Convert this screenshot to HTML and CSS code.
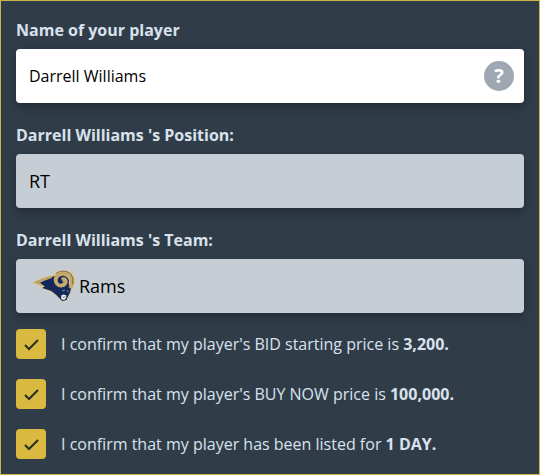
FILE: index.html
```html
<!DOCTYPE html>
<html lang="en">
<head>
    <meta charset="UTF-8">
    <meta name="viewport" content="width=device-width, initial-scale=1.0">
    <title>Confirm your player</title>
    <link rel="stylesheet" href="styles.css">
</head>
<body>
    <form class="player-form">
        <div class="field">
            <label class="title" for="player-name">Name of your player</label>
            <div class="box">
                <input type="text" id="player-name" value="Darrell Williams">
                <button type="button" class="help" aria-label="Help">?</button>
            </div>
        </div>
        <div class="field">
            <label class="title" for="position">Darrell Williams 's Position:</label>
            <div class="box locked">
                <input type="text" id="position" value="RT" readonly>
            </div>
        </div>
        <div class="field">
            <label class="title" for="team">Darrell Williams 's Team:</label>
            <div class="box locked">
                <svg class="team-logo" viewBox="36 27 128 93" aria-hidden="true">
                    <path d="M36 65 Q62 48 98 40 Q110 27 128 27 Q150 27 160 43 Q167 62 155 80 L151 86 Q151 96 145 102 L137 118 L125 119 L115 112 L112 105 L104 102 Q98 94 90 90 L65 82 L53 70 Z" fill="#dcc795"/>
                    <path d="M58 64 L98 46 L112 40 L150 76 Q148 94 142 101 L136 114 L124 117 L116 109 L106 99 L92 88 L66 79 L73 74 Z" fill="#14285b"/>
                    <path d="M39 65 Q63 49 98 43 L92 51 L59 62 L68 76 L54 68 Z" fill="#bfa266"/>
                    <path d="M147 80 Q157 65 151 51 Q144 37 127 38 Q107 40 105 56 Q107 71 121 72 Q135 70 134 59 Q130 52 123 56" fill="none" stroke="#c6a86b" stroke-width="12"/>
                    <path d="M121 66 Q112 64 113 55 Q117 45 129 46 Q141 49 142 60 Q142 70 135 77" fill="none" stroke="#14285b" stroke-width="4"/>
                    <path d="M105 37 Q130 23 149 38 Q159 51 154 68" fill="none" stroke="#5b4d39" stroke-width="2"/>
                    <path d="M123 88 L132 85 M137 88 L143 89" fill="none" stroke="#9aa5c2" stroke-width="2"/>
                    <path d="M121 101 L128 98 L136 101 L135 109 L129 114 L121 111 Z" fill="#f4f5f8"/>
                    <path d="M125 105 L129 107 L133 104" fill="none" stroke="#14285b" stroke-width="2"/>
                </svg>
                <input type="text" id="team" value="Rams" readonly>
            </div>
        </div>
        <div class="confirms">
            <label class="confirm">
                <input type="checkbox" checked>
                <svg class="tick" viewBox="0 0 30 30" aria-hidden="true"><path d="M9 16 L13 20 L22 11"/></svg>
                <span>I confirm that my player's BID starting price is <b>3,200.</b></span>
            </label>
            <label class="confirm">
                <input type="checkbox" checked>
                <svg class="tick" viewBox="0 0 30 30" aria-hidden="true"><path d="M9 16 L13 20 L22 11"/></svg>
                <span>I confirm that my player's BUY NOW price is <b>100,000.</b></span>
            </label>
            <label class="confirm">
                <input type="checkbox" checked>
                <svg class="tick" viewBox="0 0 30 30" aria-hidden="true"><path d="M9 16 L13 20 L22 11"/></svg>
                <span>I confirm that my player has been listed for <b>1 DAY.</b></span>
            </label>
        </div>
    </form>
</body>
</html>
```

FILE: styles.css
```css
* {
    box-sizing: border-box;
}
body {
    margin: 0;
    background: #303d49;
    color: #d9e2ec;
    font-family: 'Open Sans', sans-serif;
    font-size: 16px;
}
.player-form {
    min-height: 100vh;
    padding: 17px 15px 15px;
    border: 1px solid #cdb34c;
}
.field + .field {
    margin-top: 20px;
}
.title {
    display: block;
    margin-bottom: 7px;
    font-weight: 700;
    line-height: 24px;
}
.box {
    display: flex;
    align-items: center;
    height: 54px;
    padding: 0 10px 0 13px;
    border-radius: 4px;
    background: #fff;
    box-shadow: 0 4px 10px rgba(0, 0, 0, 0.3);
}
.box input {
    flex: 1;
    min-width: 0;
    padding: 0;
    border: none;
    outline: none;
    background: transparent;
    color: #000;
    font-family: inherit;
    font-size: 16px;
}
.locked {
    background: #c6cdd4;
}
.locked input {
    font-size: 18px;
}
.help {
    width: 30px;
    height: 30px;
    padding: 0;
    border: none;
    border-radius: 50%;
    background: #9fa8b2;
    color: #fff;
    font-family: inherit;
    font-size: 20px;
    font-weight: 700;
    line-height: 30px;
    cursor: pointer;
}
.team-logo {
    width: 44px;
    height: 32px;
    margin: 0 3px;
}
.confirms {
    display: flex;
    flex-direction: column;
    gap: 20px;
    margin-top: 16px;
}
.confirm {
    display: grid;
    grid-template-columns: 30px 1fr;
    column-gap: 15px;
    align-items: center;
    line-height: 24px;
    cursor: pointer;
}
.confirm input,
.tick {
    grid-area: 1 / 1;
    width: 30px;
    height: 30px;
}
.confirm input {
    appearance: none;
    margin: 0;
    border-radius: 4px;
    background: #dab941;
    cursor: pointer;
}
.tick {
    display: none;
    fill: none;
    stroke: #26301f;
    stroke-width: 2;
    pointer-events: none;
}
.confirm input:checked + .tick {
    display: block;
}
```
